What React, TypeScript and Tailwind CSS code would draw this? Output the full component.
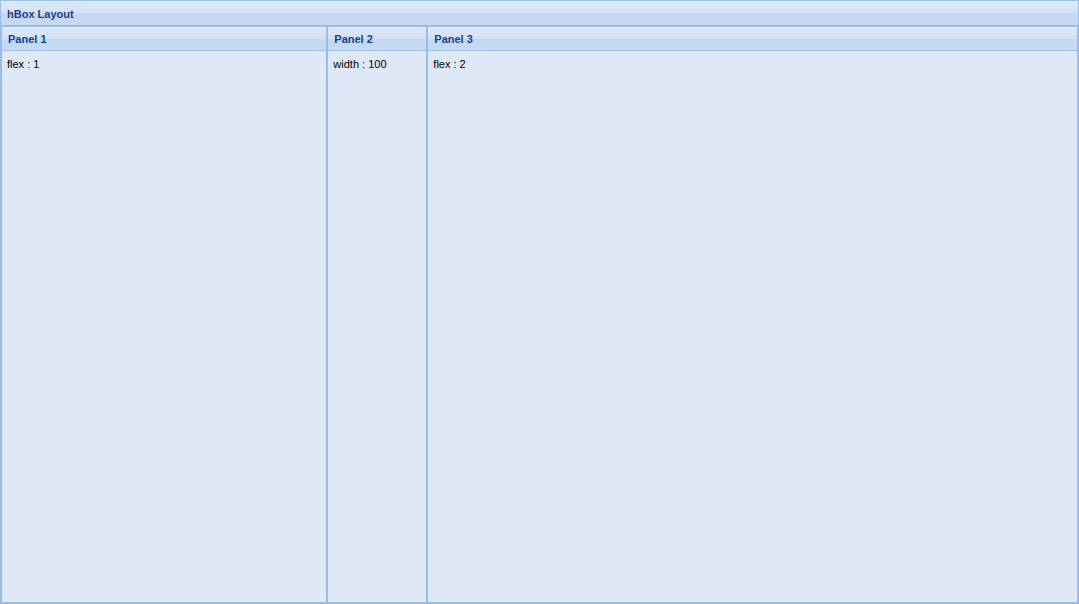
import React from 'react';

const headerBg =
  'bg-[linear-gradient(to_bottom,#dce8f7_0%,#d3e1f4_48%,#c4d7f0_52%,#c9daf1_100%)]';

interface PanelProps {
  title: string;
  text: string;
  className: string;
}

const Panel: React.FC<PanelProps> = ({ title, text, className }) => (
  <div className={`flex flex-col border border-[#99bbe8] bg-[#dfe8f6] ${className}`}>
    <div className={`h-[24px] shrink-0 border-b border-[#99bbe8] border-t border-t-white/60 ${headerBg} flex items-center pl-[6px] pt-[1px]`}>
      <span className="text-[11px] font-bold text-[#15428b]">{title}</span>
    </div>
    <div className="flex-1 pl-[5px] pr-[4px] pt-[5px] text-[11px] text-black">{text}</div>
  </div>
);

export default function App() {
  return (
    <div
      className="w-[1079px] h-[604px] flex flex-col border border-[#99bbe8] bg-[#dfe8f6]"
      style={{ fontFamily: '"Liberation Sans", Tahoma, sans-serif' }}
    >
      <div className={`h-[25px] shrink-0 border-b border-[#99bbe8] border-t border-t-white/60 ${headerBg} flex items-center pl-[6px] pt-[2px]`}>
        <span className="text-[11px] font-bold text-[#15428b]">hBox Layout</span>
      </div>
      <div className="flex-1 flex min-h-0">
        <Panel title="Panel 1" text="flex : 1" className="flex-[1] min-w-0" />
        <Panel title="Panel 2" text="width : 100" className="w-[100px] shrink-0" />
        <Panel title="Panel 3" text="flex : 2" className="flex-[2] min-w-0" />
      </div>
    </div>
  );
}
